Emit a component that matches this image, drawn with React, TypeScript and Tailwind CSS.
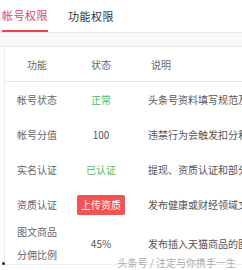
const font = { fontFamily: '"Noto Sans CJK SC", "Liberation Sans", sans-serif' };

type Row = {
  name: string[];
  status: React.ReactNode;
  desc: string;
  h: string;
};

const rows: Row[] = [
  { name: ["帐号状态"], status: <span className="text-[#5cb85c]">正常</span>, desc: "头条号资料填写规范及内容质量", h: "h-[35px]" },
  { name: ["帐号分值"], status: <span className="text-[#555]">100</span>, desc: "违禁行为会触发扣分和相应处罚", h: "h-[34px]" },
  { name: ["实名认证"], status: <span className="text-[#5cb85c]">已认证</span>, desc: "提现、资质认证和部分权限需要", h: "h-[36px]" },
  {
    name: ["资质认证"],
    status: (
      <span className="flex h-[20px] w-[48px] items-center justify-center rounded-[2px] bg-[#f05454] text-white">
        上传资质
      </span>
    ),
    desc: "发布健康或财经领域文章需要",
    h: "h-[35px]",
  },
  { name: ["图文商品", "分佣比例"], status: <span className="text-[#555]">45%</span>, desc: "发布插入天猫商品的图文", h: "h-[42px]" },
];

export default function App() {
  return (
    <div className="relative h-[270px] w-[242px] overflow-hidden bg-white" style={font}>
      <div className="flex h-[33px] border-b border-[#e8e8e8] bg-white text-[11px] tracking-[0.5px]">
        <div className="ml-[2px] flex w-[46px] flex-col">
          <div className="flex flex-1 items-center justify-center whitespace-nowrap text-[#e0474f]">帐号权限</div>
          <div className="h-[2px] bg-[#e0474f]" />
        </div>
        <div className="ml-[20px] flex items-center whitespace-nowrap text-[#333]">功能权限</div>
      </div>
      <div className="h-[14px] border-b border-[#e6e6e6] bg-[#f8f8f8]" />
      <div className="ml-[4px] w-[400px] border-l border-[#ececec] text-[10px] text-[#666]">
        <div className="flex h-[35px] items-center border-b border-[#e6e6e6]">
          <div className="w-[64px] text-center">功能</div>
          <div className="w-[64px] text-center">状态</div>
          <div className="pl-[18px]">说明</div>
        </div>
        {rows.map((r) => (
          <div key={r.name[0]} className={`flex items-center ${r.h}`}>
            <div className="flex w-[64px] flex-col items-center leading-[23px]">
              {r.name.map((n) => (
                <span key={n}>{n}</span>
              ))}
            </div>
            <div className="flex w-[64px] justify-center">{r.status}</div>
            <div className="whitespace-nowrap pl-[15px] text-[#555]">{r.desc}</div>
          </div>
        ))}
        <div className="h-[1px] bg-[#ececec]" />
      </div>
      <div className="absolute left-[2px] top-[262px] h-[3px] w-[3px] rounded-full bg-[#222]" />
      <div
        className="absolute right-[6px] top-[255px] text-[10px] text-[#aaa]"
        style={{ textShadow: "0 0 2px #fff, 0 0 2px #fff" }}
      >
        头条号 / 注定与你携手一生
      </div>
    </div>
  );
}
